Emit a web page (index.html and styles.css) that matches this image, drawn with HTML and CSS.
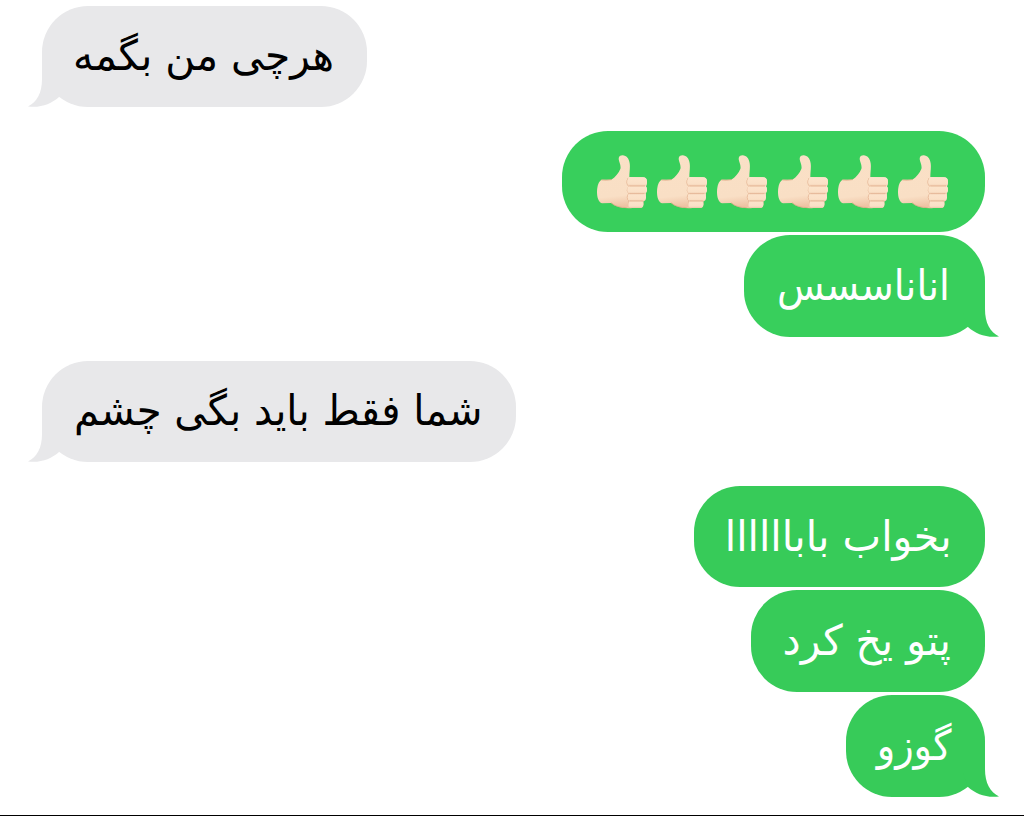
FILE: index.html
```html
<!DOCTYPE html>
<html lang="fa">
<head>
  <meta charset="UTF-8" />
  <meta name="viewport" content="width=device-width, initial-scale=1" />
  <title>Messages</title>
  <link rel="stylesheet" href="styles.css">
</head>
<body>
  <svg class="defs" aria-hidden="true">
    <defs>
      <linearGradient id="skin" x1="0" y1="0" x2="0.1" y2="1">
        <stop offset="0" stop-color="#fae0c6" />
        <stop offset="0.8" stop-color="#f9dfc5" />
        <stop offset="1" stop-color="#eec3a4" />
      </linearGradient>
      <linearGradient id="finger" x1="0" y1="0" x2="0" y2="1">
        <stop offset="0" stop-color="#fce4cc" />
        <stop offset="0.75" stop-color="#fae0c6" />
        <stop offset="1" stop-color="#eec5a8" />
      </linearGradient>
    </defs>
    <symbol id="tail" viewBox="0 0 36 52">
      <path d="M14 0V24C14 38 9 47 0 51.5C13 53 23 49 31 42L36 28V0Z" />
    </symbol>
    <symbol id="thumb" viewBox="0 0 150 162">
      <path fill="url(#skin)" d="M65 12C65 4 70 1 77 1C88 2 96 10 98 25C100 38 97 51 97 66L137 67C147 67 150 73 149 81C150 87 149 91 147 94C151 101 150 108 146 113C148 119 147 126 143 130L139 135C142 150 138 157 130 158L107 159C83 161 59 158 43 144L15 145C4 140 0 127 0 110C1 91 5 79 14 74L43 74C56 66 65 54 70 42C73 31 66 22 65 12Z" />
      <path class="crease" d="M14 75Q27 77 43 74M43 144Q56 157 88 158M93 70Q85 84 95 94Q86 106 95 116Q86 127 96 138Q91 148 99 157" />
      <g fill="url(#finger)">
        <rect x="91" y="67" width="59" height="27" rx="12" />
        <rect x="91" y="92" width="59" height="25" rx="11" />
        <rect x="92" y="115" width="55" height="24" rx="11" />
        <rect x="94" y="137" width="45" height="22" rx="10" />
      </g>
      <path class="crease" d="M98 93H143M98 116H141M99 138H136" />
    </symbol>
  </svg>

  <main class="chat">
    <div class="bubble received first">
      <span class="text">هرچی من بگمه</span>
      <svg class="tail"><use href="#tail" /></svg>
    </div>

    <div class="bubble sent thumbs turn">
      <svg class="emoji"><use href="#thumb" /></svg>
      <svg class="emoji"><use href="#thumb" /></svg>
      <svg class="emoji"><use href="#thumb" /></svg>
      <svg class="emoji"><use href="#thumb" /></svg>
      <svg class="emoji"><use href="#thumb" /></svg>
      <svg class="emoji"><use href="#thumb" /></svg>
    </div>
    <div class="bubble sent pineapple">
      <span class="text">اناناسسس</span>
      <svg class="tail"><use href="#tail" /></svg>
    </div>

    <div class="bubble received okay turn">
      <span class="text">شما فقط باید بگی چشم</span>
      <svg class="tail"><use href="#tail" /></svg>
    </div>

    <div class="bubble sent sleep turn">
      <span class="text">بخواب باباااااا</span>
    </div>
    <div class="bubble sent blanket">
      <span class="text">پتو یخ کرد</span>
    </div>
    <div class="bubble sent last">
      <span class="text">گوزو</span>
      <svg class="tail"><use href="#tail" /></svg>
    </div>
  </main>
</body>
</html>
```
FILE: styles.css
```css
* {
  margin: 0;
  padding: 0;
  box-sizing: border-box;
}

body {
  background-color: #fff;
  font-family: "DejaVu Sans", sans-serif;
}

.defs {
  position: absolute;
  width: 0;
  height: 0;
}

.chat {
  display: flex;
  flex-direction: column;
  gap: 3px;
  height: 816px;
  padding: 5.5px 39px 0 42px;
  border-bottom: 1px solid #000;
  overflow: hidden;
}

.bubble {
  position: relative;
  display: flex;
  flex-shrink: 0;
  align-items: center;
  justify-content: center;
  height: 101.7px;
  padding-right: 2px;
  border-radius: 46px;
}

.received {
  align-self: flex-start;
  background-color: #e8e8ea;
  color: #000;
  fill: #e8e8ea;
}

.sent {
  align-self: flex-end;
  background-color: #38cf5c;
  color: #fff;
  fill: #38cf5c;
}

.turn {
  margin-top: 20.5px;
}

.text {
  direction: rtl;
  white-space: nowrap;
  font-size: 42px;
  line-height: 60px;
}

.tail {
  position: absolute;
  bottom: 0;
  left: -14px;
  width: 36px;
  height: 52px;
}

.sent .tail {
  left: auto;
  right: -14px;
  transform: scaleX(-1);
}

/* Thumbs up row */
.emoji {
  width: 50px;
  height: 54px;
}

.crease {
  fill: none;
  stroke: #e0ac89;
  stroke-width: 2.5;
  stroke-linecap: round;
}

.first {
  width: 325px;
}

.first .text {
  transform: scaleX(0.97);
}

.thumbs {
  width: 423px;
  gap: 10.2px;
}

.pineapple {
  width: 241px;
}

.pineapple .text {
  transform: scaleX(0.925);
}

.okay {
  width: 474px;
}

.okay .text {
  transform: scaleX(0.958);
}

.sleep {
  width: 291px;
}

.sleep .text {
  transform: scaleX(0.976);
}

.blanket {
  width: 234px;
}

.blanket .text {
  transform: scaleX(0.97);
}

.last {
  width: 139px;
}

.last .text {
  transform: scaleX(0.91);
}

.sleep,
.blanket,
.last {
  background-color: #37cb59;
  fill: #37cb59;
}
```
